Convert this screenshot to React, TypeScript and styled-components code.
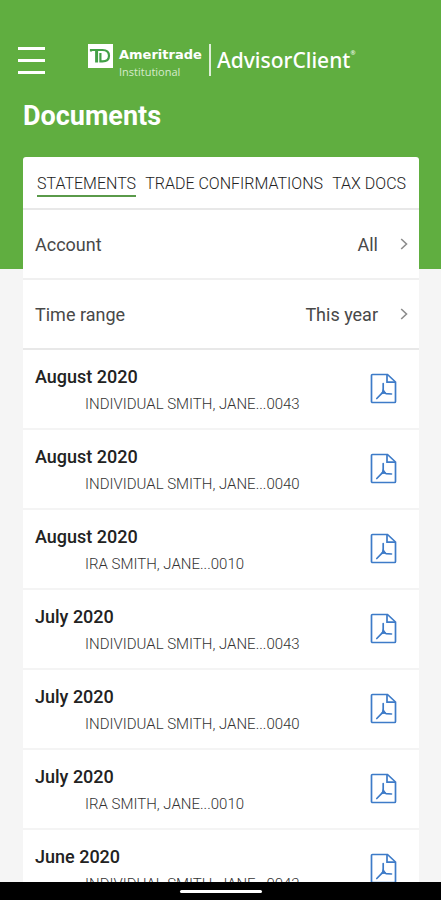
import React, { useState } from "react";
import styled, { createGlobalStyle } from "styled-components";

const GlobalStyle = createGlobalStyle`
  * { box-sizing: border-box; }
  body { margin: 0; background: #f5f5f5; font-family: Roboto, "Liberation Sans", sans-serif; }
  button { font: inherit; color: inherit; background: none; border: 0; padding: 0; cursor: pointer; }
`;

const Screen = styled.div`
  height: 100vh;
  display: flex;
  flex-direction: column;
  background: #f5f5f5;
`;

const Scroller = styled.div`
  flex: 1;
  min-height: 0;
  overflow-y: auto;
  scrollbar-width: none;
`;

const Header = styled.header`
  background: #60ae40;
  color: #fff;
  padding: 40px 18px 136px;
`;

const TopBar = styled.div`
  display: flex;
  align-items: center;
  gap: 43px;
  height: 40px;
`;

const MenuButton = styled.button`
  display: flex;
  flex-direction: column;
  gap: 9px;
  width: 27px;
`;

const MenuLine = styled.span`
  height: 3px;
  width: 100%;
  background: #fff;
`;

const Brand = styled.div`
  display: flex;
  align-items: center;
  height: 32px;
`;

const TdMark = styled.svg`
  align-self: flex-start;
  width: 25px;
  height: 24px;
`;

const BrandWords = styled.div`
  display: flex;
  flex-direction: column;
  align-self: flex-start;
  padding: 3px 0 0 6px;
  width: 96px;
`;

const BrandName = styled.span`
  font: 700 13px/16px "DejaVu Sans", sans-serif;
  white-space: nowrap;
`;

const BrandUnit = styled.span`
  font: 400 11px/18px "Open Sans", sans-serif;
  color: #d6ebcc;
`;

const Product = styled.span`
  display: flex;
  border-left: 2px solid #dfefd8;
  padding-left: 6px;
  font: 500 21px/32px "Noto Sans", sans-serif;
`;

const Mark = styled.sup`
  font-size: 6px;
  line-height: 18px;
`;

const Title = styled.h1`
  margin: 20px 0 0 5px;
  font-size: 27px;
  line-height: 33px;
  font-weight: 700;
`;

const Card = styled.main`
  margin: -112px 22px 0 23px;
  background: #fff;
  border-radius: 3px 3px 0 0;
`;

const Filters = styled.section`
  border-bottom: 2px solid #e8e8e8;
`;

const Tabs = styled.nav`
  display: flex;
  justify-content: space-between;
  padding: 15px 13px 11px 14px;
  border-bottom: 2px solid #e8e8e8;
`;

const Tab = styled.button<{ $active: boolean }>`
  font-size: 16px;
  font-weight: 300;
  line-height: 23px;
  color: #222;
  white-space: nowrap;
  border-bottom: 2px solid ${(p) => (p.$active ? "#5a9a4a" : "transparent")};
`;

const FilterRow = styled.button`
  display: flex;
  align-items: center;
  width: 100%;
  height: 70px;
  padding: 0 11px 0 12px;
  font-size: 18px;
  color: #484848;
  border-bottom: 2px solid #f0f0f0;
  &:last-child { height: 68px; border-bottom: 0; }
`;

const FilterValue = styled.span`
  margin-left: auto;
  margin-right: 22px;
`;

const Chevron = styled.svg`
  width: 8px;
  height: 12px;
`;

const List = styled.ul`
  list-style: none;
  margin: 0;
  padding: 0;
`;

const Item = styled.li`
  display: flex;
  align-items: flex-start;
  justify-content: space-between;
  height: 80px;
  padding: 15px 22px 0 12px;
  border-bottom: 2px solid #f4f4f4;
`;

const Period = styled.h2`
  margin: 0;
  font-size: 18px;
  line-height: 24px;
  font-weight: 500;
  color: #222;
`;

const Holder = styled.p`
  margin: 4px 0 0 50px;
  font-size: 15px;
  line-height: 22px;
  font-weight: 300;
  color: #333;
  white-space: nowrap;
`;

const PdfButton = styled.button`
  display: flex;
  margin-top: 8px;
`;

const SystemBar = styled.footer`
  flex: none;
  height: 18px;
  background: #000;
  display: flex;
  justify-content: center;
  padding-top: 8px;
`;

const HomeIndicator = styled.span`
  width: 82px;
  height: 3px;
  border-radius: 2px;
  background: #fff;
`;

const PdfIcon = () => (
  <svg width="27" height="31" viewBox="0 0 27 31" fill="none" stroke="#3d7bc8" strokeWidth="1.7" aria-hidden="true">
    <path d="M2.5 1.5H17.5L25.5 9V28.5Q25.5 29.5 24.5 29.5H2.5Q1.5 29.5 1.5 28.5V2.5Q1.5 1.5 2.5 1.5Z" />
    <path d="M17 2V9.2H25" />
    <path d="M13.2 10.5V18.8L6.8 25.5M13.2 18.8L16 20.6L21.5 21" strokeLinecap="round" strokeLinejoin="round" />
    <path d="M13 15.5L11 21.2L16.5 20.6Z" fill="#3d7bc8" stroke="none" />
  </svg>
);

const ChevronIcon = () => (
  <Chevron viewBox="0 0 8 12" fill="none" stroke="#8c8c8c" strokeWidth="1.6" aria-hidden="true">
    <path d="M1.2 1L6.5 6L1.2 11" />
  </Chevron>
);

const tabs = ["STATEMENTS", "TRADE CONFIRMATIONS", "TAX DOCS"];
const filters = [
  { label: "Account", value: "All" },
  { label: "Time range", value: "This year" },
];
const documents = [
  { period: "August 2020", holder: "INDIVIDUAL SMITH, JANE...0043" },
  { period: "August 2020", holder: "INDIVIDUAL SMITH, JANE...0040" },
  { period: "August 2020", holder: "IRA SMITH, JANE...0010" },
  { period: "July 2020", holder: "INDIVIDUAL SMITH, JANE...0043" },
  { period: "July 2020", holder: "INDIVIDUAL SMITH, JANE...0040" },
  { period: "July 2020", holder: "IRA SMITH, JANE...0010" },
  { period: "June 2020", holder: "INDIVIDUAL SMITH, JANE...0043" },
];

export default function App() {
  const [active, setActive] = useState(0);
  return (
    <Screen>
      <GlobalStyle />
      <Scroller>
        <Header>
          <TopBar>
            <MenuButton aria-label="Menu">
              <MenuLine />
              <MenuLine />
              <MenuLine />
            </MenuButton>
            <Brand>
              <TdMark viewBox="0 0 25 24" aria-label="TD">
                <path fill="#fff" d="M0 0h25v24H0z" />
                <path fill="none" stroke="#43a047" strokeWidth="2.2" d="M3 7.4V6H14.5C19 6 21 8 21 11.8C21 15.8 19 17.4 14.5 17.4H12.4V9" />
                <path fill="none" stroke="#43a047" strokeWidth="3" d="M8.6 6V18.5" />
              </TdMark>
              <BrandWords>
                <BrandName>Ameritrade</BrandName>
                <BrandUnit>Institutional</BrandUnit>
              </BrandWords>
              <Product>
                AdvisorClient<Mark>®</Mark>
              </Product>
            </Brand>
          </TopBar>
          <Title>Documents</Title>
        </Header>
        <Card>
          <Filters>
            <Tabs>
              {tabs.map((name, i) => (
                <Tab key={name} $active={i === active} onClick={() => setActive(i)}>
                  {name}
                </Tab>
              ))}
            </Tabs>
            {filters.map((f) => (
              <FilterRow key={f.label}>
                <span>{f.label}</span>
                <FilterValue>{f.value}</FilterValue>
                <ChevronIcon />
              </FilterRow>
            ))}
          </Filters>
          <List>
            {documents.map((d, i) => (
              <Item key={i}>
                <div>
                  <Period>{d.period}</Period>
                  <Holder>{d.holder}</Holder>
                </div>
                <PdfButton aria-label={`Open PDF, ${d.period}, ${d.holder}`}>
                  <PdfIcon />
                </PdfButton>
              </Item>
            ))}
          </List>
        </Card>
      </Scroller>
      <SystemBar>
        <HomeIndicator />
      </SystemBar>
    </Screen>
  );
}
